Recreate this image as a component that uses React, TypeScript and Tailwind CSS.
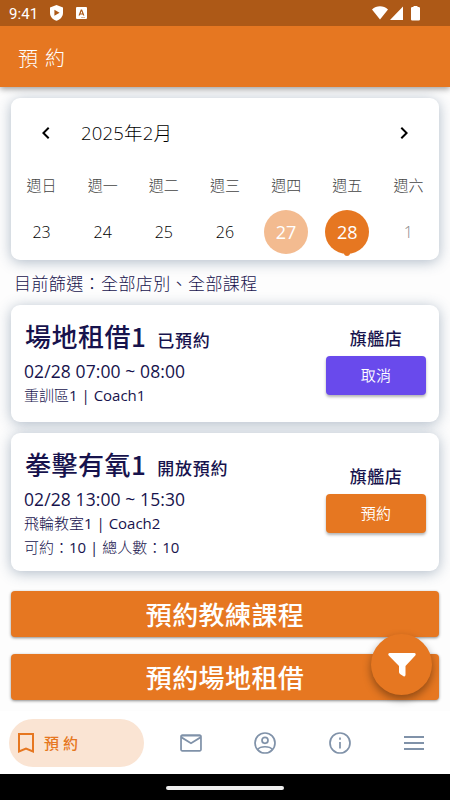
import type { ReactNode } from 'react';

const WEEKDAYS = ['週日', '週一', '週二', '週三', '週四', '週五', '週六'];
const CARD = 'mx-[11px] rounded-[9px] bg-white shadow-[0_2px_14px_rgba(50,78,112,0.38)]';

function MdIcon({ d, className }: { d: string; className: string }) {
  return (
    <svg viewBox="0 0 24 24" fill="currentColor" className={className}>
      <path d={d} />
    </svg>
  );
}

function StatusBar() {
  return (
    <div className="flex h-[26px] shrink-0 items-center bg-[#ad5917] pr-[29px] pl-[9px] text-white">
      <span className="w-[41px] font-[Roboto] text-[15px] leading-[26px] tracking-[0.1px] translate-y-[1px]">9:41</span>
      <svg viewBox="0 0 13 16" className="h-4 w-[13px] fill-current">
        <path fillRule="evenodd" d="M6.5 0 13 2.5v5.2c0 3.8-2.5 6.7-6.5 8C2.500 14.400 0 11.500 0 7.700V2.500zM4.400 4.800v6L9.600 7.800z" />
      </svg>
      <svg viewBox="0 0 11 12" className="ml-[13px] h-3 w-[11px] fill-current">
        <path fillRule="evenodd" d="M1 0h9a1 1 0 0 1 1 1v10a1 1 0 0 1-1 1H1a1 1 0 0 1-1-1V1a1 1 0 0 1 1-1zM4.800 2.500 2.500 8.600h1.300l.4-1.200h2.500l.4 1.200h1.300L6.100 2.500zm.7 1.600.8 2.300H4.600zM5.500 10v.8h1.100V10zm2 0v.8h1.100V10z" />
      </svg>
      <svg viewBox="0 0 49 16" className="ml-auto h-4 w-[49px] fill-current">
        <path d="M0 4.500C4.500.1 11.500.1 16 4.500L8 14.500zM18 15 31 1.500V15zM41.500 1h4v1h1.200q1.300 0 1.300 1.300v11.200q0 1-1.300 1h-6.400q-1.300 0-1.300-1V3.300Q39 2 40.300 2h1.200z" />
      </svg>
    </div>
  );
}

function Day({ children, muted }: { children: ReactNode; muted?: boolean }) {
  return (
    <span className={muted ? 'text-center text-[16px] leading-[44px] font-light text-[#888]' : 'text-center text-[16px] leading-[44px] font-light text-black'}>
      {children}
    </span>
  );
}

function Calendar() {
  return (
    <section className={`${CARD} mt-[11px] h-[162px] shrink-0 font-['Open_Sans','Noto_Sans_CJK_TC',sans-serif]`}>
      <div className="flex h-[70px] items-center pr-[23px] pl-[23px]">
        <MdIcon className="size-6" d="M15.410 7.410 14 6l-6 6 6 6 1.410-1.410L10.830 12z" />
        <span className="ml-[23px] text-[18.500px] font-light tracking-[0.2px] text-black">2025年2月</span>
        <MdIcon className="ml-auto size-6" d="M10 6 8.590 7.410 13.170 12l-4.580 4.590L10 18l6-6z" />
      </div>
      <div className="grid grid-cols-7">
        {WEEKDAYS.map((d) => (
          <span key={d} className="h-[42px] text-center text-[15px] leading-[35px] font-light text-[#444]">{d}</span>
        ))}
        <Day>23</Day>
        <Day>24</Day>
        <Day>25</Day>
        <Day>26</Day>
        <span className="mx-auto size-11 rounded-full bg-[#f3bb90] text-center text-[18px] leading-[44px] text-white">27</span>
        <span className="relative mx-auto size-11 rounded-full bg-[#e67721] text-center text-[18px] leading-[44px] text-white">
          28
          <span className="absolute -bottom-[2px] left-[19px] h-[6px] w-[6px] rounded-full bg-[#e67721]" />
        </span>
        <Day muted>1</Day>
      </div>
    </section>
  );
}

// Latin runs are set one weight heavier than the light Chinese text around them.
function MixedText({ text }: { text: string }) {
  return text.split(/([\x20-\x7e]+)/).map((part, i) => (
    <span key={i} className={i % 2 ? 'font-normal' : 'font-light'}>{part}</span>
  ));
}

type BookingProps = {
  title: string;
  status: string;
  time: string;
  details: string[];
  action: string;
  className: string;
  actionClass: string;
};

function Booking({ title, status, time, details, action, className, actionClass }: BookingProps) {
  return (
    <section className={`${CARD} ${className} flex shrink-0 justify-between pr-[13px] pl-[14px] text-[#17134d]`}>
      <div className="pt-3">
        <div className="flex h-[39px] items-baseline leading-[38px]">
          <h2 className="text-[26px] font-medium tracking-[0.5px]">{title}</h2>
          <span className="ml-[11px] text-[17px] font-medium tracking-[0.7px]">{status}</span>
        </div>
        <div className="-ml-px font-['Open_Sans','Noto_Sans_CJK_TC',sans-serif]">
          <p className="h-[27px] text-[17.500px] leading-[30px] font-normal tracking-[0.1px]">{time}</p>
          {details.map((line) => (
            <p key={line} className="h-6 text-[15px] leading-[24px]"><MixedText text={line} /></p>
          ))}
        </div>
      </div>
      <div className="flex w-[100px] flex-col justify-center">
        <span className="h-[31px] text-center text-[17px] leading-[26px] font-medium tracking-[0.5px]">旗艦店</span>
        <button className={`${actionClass} mb-[8px] h-[39px] rounded-[4px] text-[15px] font-[350] tracking-[0.3px] text-white shadow-[0_2px_3px_rgba(0,0,0,0.3)]`}>{action}</button>
      </div>
    </section>
  );
}

function WideButton({ children, className }: { children: ReactNode; className: string }) {
  return (
    <button className={`${className} mx-[11px] h-[46px] shrink-0 rounded-[4px] bg-[#e67721] pb-px text-[26px] font-medium tracking-[0.4px] text-white shadow-[0_1px_3px_rgba(0,0,0,0.45)]`}>
      {children}
    </button>
  );
}

function BottomNav() {
  return (
    <nav className="mt-[11px] flex h-[63px] shrink-0 items-center bg-white pl-[9px] text-[#8092a9]">
      <div className="mt-px flex h-12 w-[135px] items-center rounded-full bg-[#fae4d3] pl-1 text-[#e67721]">
        <svg viewBox="0 0 26 26" className="size-[26px] fill-none stroke-current stroke-2">
          <path d="M6 4h14v17.500l-7-2.900-7 2.900z" />
        </svg>
        <span className="ml-[5px] text-[15px] font-medium tracking-[4px]">預約</span>
      </div>
      <MdIcon className="mt-px ml-[34px] size-[26px]" d="M22 6c0-1.100-.9-2-2-2H4c-1.100 0-2 .9-2 2v12c0 1.100.9 2 2 2h16c1.100 0 2-.9 2-2zm-1.600 0-8.400 5.400L3.600 6zm0 12.400H3.600V8l8.400 5.200L20.400 8z" />
      <svg viewBox="0 0 26 26" className="mt-px ml-[48px] size-[26px] fill-none stroke-current stroke-[1.700]">
        <circle cx="13" cy="13" r="10" />
        <circle cx="13" cy="10.300" r="3" />
        <path d="M5.800 19.500C8.300 15.800 17.700 15.800 20.200 19.500" />
      </svg>
      <svg viewBox="0 0 26 26" className="mt-px ml-[49px] size-[26px] fill-none stroke-current stroke-[1.700]">
        <circle cx="13" cy="13" r="10" />
        <path d="M13 7.500v2.200M13 12v6.500" />
      </svg>
      <svg viewBox="0 0 20 14" className="mt-px ml-[51px] h-[14px] w-5 fill-current">
        <path d="M0 0h20v2H0zM0 6h20v2H0zM0 12h20v2H0z" />
      </svg>
    </nav>
  );
}

export default function App() {
  return (
    <main className="relative flex h-[800px] w-[450px] flex-col overflow-hidden bg-[#fdfdfd] font-['Noto_Sans_CJK_TC',sans-serif]">
      <header className="relative z-10 shrink-0 shadow-[0_2px_6px_rgba(0,0,0,0.38)]">
        <StatusBar />
        <h1 className="h-[61px] bg-[#e67721] pl-[18px] text-[20px] leading-[63px] font-light tracking-[7px] text-white">預約</h1>
      </header>
      <Calendar />
      <p className="mt-[9px] h-[36px] shrink-0 pl-[14px] text-[17px] leading-[28px] font-light tracking-[0.4px] text-[#17134d]">目前篩選：全部店別、全部課程</p>
      <Booking className="h-[117px]" title="場地租借1" status="已預約" time="02/28 07:00 ~ 08:00" details={['重訓區1 | Coach1']} action="取消" actionClass="bg-[#694aec]" />
      <Booking className="mt-[11px] h-[138px]" title="拳擊有氧1" status="開放預約" time="02/28 13:00 ~ 15:30" details={['飛輪教室1 | Coach2', '可約：10 | 總人數：10']} action="預約" actionClass="bg-[#e67721]" />
      <WideButton className="mt-[20px]">預約教練課程</WideButton>
      <WideButton className="mt-[17px]">預約場地租借</WideButton>
      <BottomNav />
      <footer className="flex h-[28px] shrink-0 justify-center bg-black pt-3">
        <span className="h-1 w-[118px] rounded-full bg-[#eee]" />
      </footer>
      <button className="absolute top-[634px] left-[371px] grid size-[61px] place-items-center rounded-full bg-[#e67721] text-white shadow-[0_4px_9px_rgba(0,0,0,0.38)]">
        <svg viewBox="0 0 28 24" className="h-6 w-7 fill-current">
          <path d="M1.500 0h25q2 .5.800 2.500L17.500 13v9q-.3 2-2 1.200L12 21q-1-.8-1-2v-6L.7 2.500Q-.5.500 1.500 0z" />
        </svg>
      </button>
    </main>
  );
}
